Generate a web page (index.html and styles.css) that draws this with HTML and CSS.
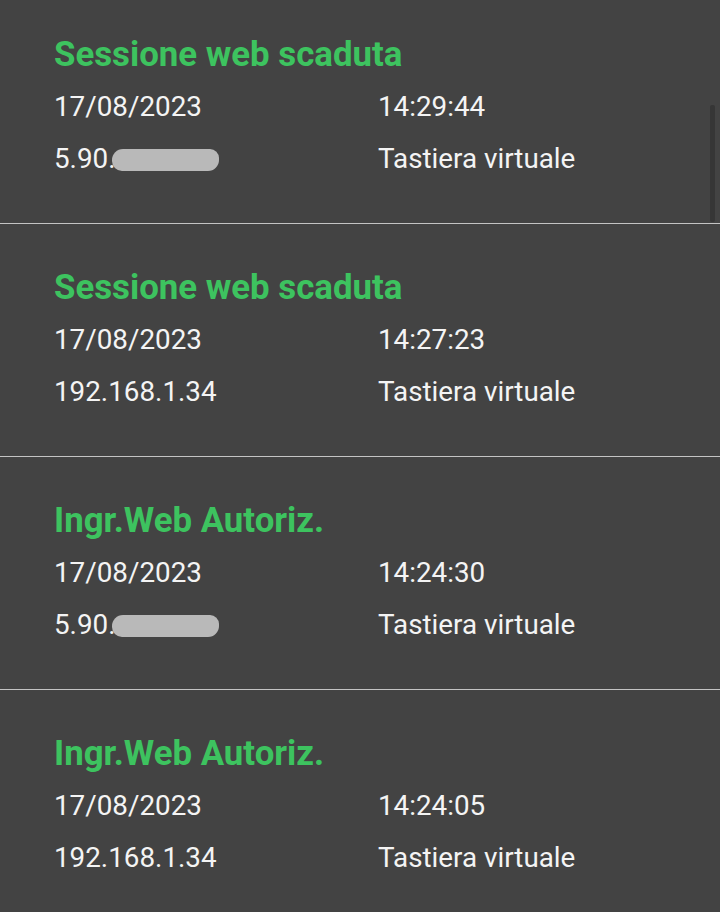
FILE: index.html
```html
<!DOCTYPE html>
<html lang="it">
<head>
  <meta charset="UTF-8">
  <meta name="viewport" content="width=device-width, initial-scale=1.0">
  <title>Accessi</title>
  <link rel="stylesheet" href="styles.css">
</head>
<body>
<div class="screen">
  <div class="scrollbar"></div>
  <ul class="log">
    <li class="entry">
      <div class="entry-title">Sessione web scaduta</div>
      <div class="entry-row"><span>17/08/2023</span><span>14:29:44</span></div>
      <div class="entry-row"><span>5.90.<i class="blur"></i></span><span>Tastiera virtuale</span></div>
    </li>
    <li class="entry">
      <div class="entry-title">Sessione web scaduta</div>
      <div class="entry-row"><span>17/08/2023</span><span>14:27:23</span></div>
      <div class="entry-row"><span>192.168.1.34</span><span>Tastiera virtuale</span></div>
    </li>
    <li class="entry">
      <div class="entry-title">Ingr.Web Autoriz.</div>
      <div class="entry-row"><span>17/08/2023</span><span>14:24:30</span></div>
      <div class="entry-row"><span>5.90.<i class="blur"></i></span><span>Tastiera virtuale</span></div>
    </li>
    <li class="entry">
      <div class="entry-title">Ingr.Web Autoriz.</div>
      <div class="entry-row"><span>17/08/2023</span><span>14:24:05</span></div>
      <div class="entry-row"><span>192.168.1.34</span><span>Tastiera virtuale</span></div>
    </li>
  </ul>
</div>
</body>
</html>
```

FILE: styles.css
```css
html, body { margin: 0; padding: 0; background: #434343; }
body { font-family: Roboto, "Noto Sans", sans-serif; color: #f4f4f4; }
.screen { position: relative; width: 720px; height: 912px; overflow: hidden; }
.scrollbar { position: absolute; left: 710px; top: 105px; width: 5px; height: 117px; background: #363636; border-radius: 2px; }
.log { list-style: none; margin: -9px 0 0; padding: 0; }
.entry { height: 232px; padding: 0 0 0 54px; border-bottom: 1px solid #c4c4c4; }
.entry-title { padding-top: 43px; font-size: 34.8px; line-height: 40px; font-weight: 700; color: #3dc35f; }
.entry-row { display: grid; grid-template-columns: 324px auto; font-size: 27.8px; line-height: 52px; }
.entry-title + .entry-row { margin-top: 7px; }
.blur { display: inline-block; width: 107px; height: 22px; margin-left: -4px; vertical-align: -3px; background: #b9b9b9; border-radius: 11px 9px 11px 10px; }
```
